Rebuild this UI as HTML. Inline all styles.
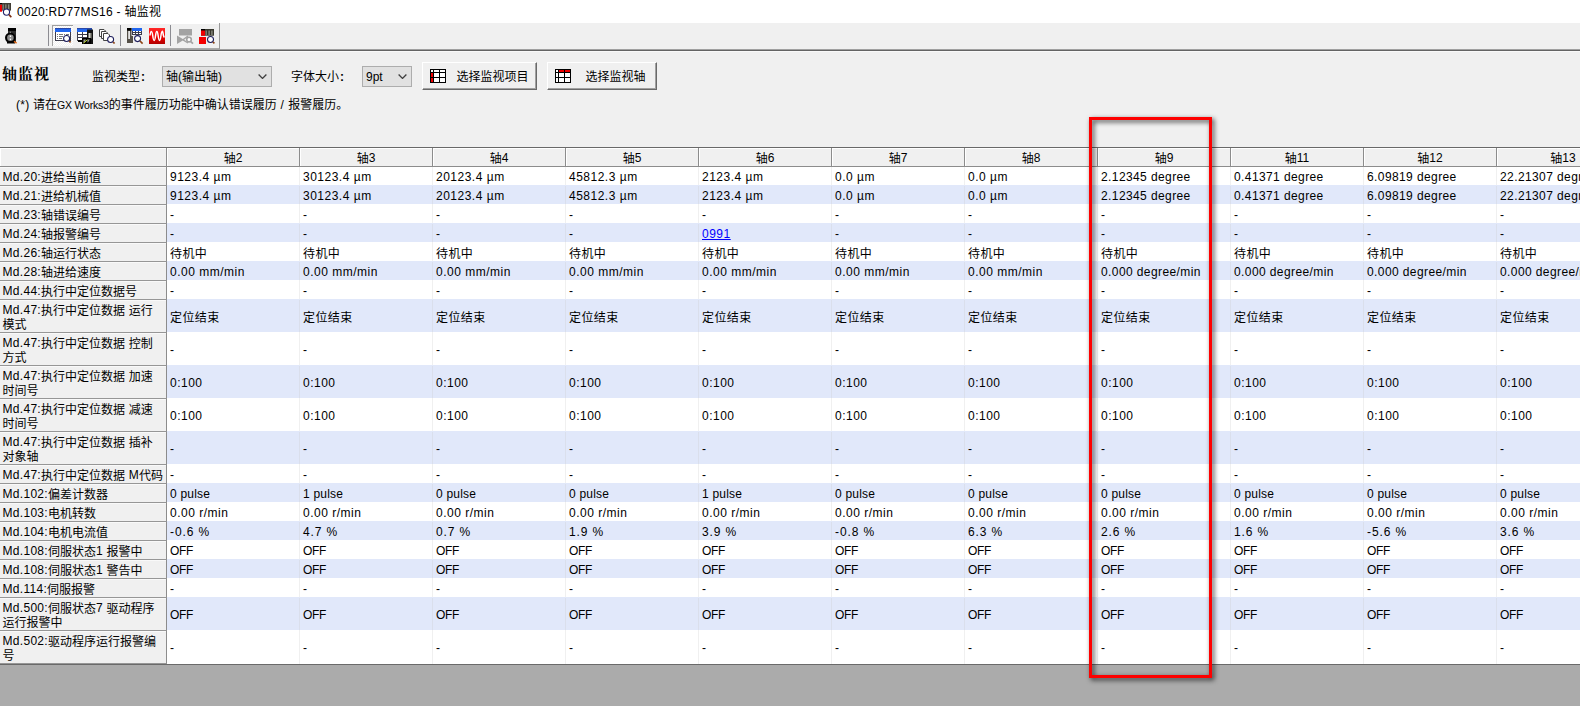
<!DOCTYPE html>
<html lang="zh-CN">
<head>
<meta charset="utf-8">
<title>0020:RD77MS16 - 轴监视</title>
<style>
html,body{margin:0;padding:0;}
body{width:1580px;height:706px;overflow:hidden;position:relative;background:#f0f0f0;
 font-family:"Liberation Sans","Noto Sans CJK SC",sans-serif;font-size:12px;color:#000;}
.abs{position:absolute;}
#titlebar{position:absolute;left:0;top:0;width:1580px;height:23px;background:#fff;}
#title{position:absolute;left:17px;top:4px;font-size:12px;line-height:16px;white-space:nowrap;letter-spacing:.3px;}
#toolbar{position:absolute;left:0;top:23px;width:1580px;height:26px;background:#f0f0f0;}
#tbline{position:absolute;left:0;top:49px;width:1580px;height:3px;background:linear-gradient(#a0a0a0 0,#a0a0a0 1px,#646464 1px,#646464 2px,#f9f9f9 2px,#f9f9f9 3px);}
#tbline2{position:absolute;left:0;top:48px;width:219px;height:1px;background:#a8a8a8;}
#tbend{position:absolute;left:219px;top:23px;width:1px;height:26px;background:#989898;}
.sep{position:absolute;top:26px;width:1px;height:20px;background:#a0a0a0;}
#h1{position:absolute;left:2px;top:64px;font-family:"Liberation Serif","Noto Serif CJK SC",serif;font-weight:bold;font-size:15px;line-height:20px;letter-spacing:1px;white-space:nowrap;}
.lbl{position:absolute;top:69px;line-height:16px;white-space:nowrap;}
.cl{font-weight:bold;margin-left:1px;}
.sel{position:absolute;top:66px;height:19px;border:1px solid #adadad;background:#e1e1e1;box-sizing:content-box;}
.sel span{position:absolute;left:3px;top:2px;line-height:17px;white-space:nowrap;}
.sel svg{position:absolute;right:4px;top:7px;}
.btn{position:absolute;top:62px;height:28px;box-sizing:border-box;background:#f0f0f0;
 border-top:1px solid #fff;border-left:1px solid #fff;border-right:1px solid #696969;border-bottom:1px solid #696969;}
.btn i{position:absolute;left:0;top:0;right:0;bottom:0;border-right:1px solid #a0a0a0;border-bottom:1px solid #a0a0a0;}
.btn svg{position:absolute;left:7px;top:6px;}
.btn span{position:absolute;top:6px;margin-left:-.5px;line-height:16px;white-space:nowrap;}
#note{position:absolute;left:16px;top:97px;line-height:16px;white-space:pre;}
#note u{text-decoration:none;font-size:10.5px;letter-spacing:-.2px;}
#tabletop{position:absolute;left:0;top:147px;width:1580px;height:1px;background:#696969;}
#grid{position:absolute;left:0;top:0;width:1580px;height:706px;overflow:hidden;}
.hr{position:absolute;left:0;top:148px;width:1700px;height:19px;background:#f0f0f0;}
.hc{position:absolute;top:0;width:132px;height:18px;border-right:1px solid #8c8c8c;border-bottom:1px solid #8c8c8c;box-shadow:inset 1px 1px 0 #fff;
 text-align:center;line-height:20px;white-space:nowrap;}
.hc.corner{left:0;width:166px;}
.r{position:absolute;left:0;width:1700px;}
.r.alt::before{content:"";position:absolute;left:167px;top:-1px;width:1500px;height:100%;background:#e1e8fa;}
#white{position:absolute;left:167px;top:167px;width:1413px;height:497px;background:#fff;}
.rh{position:absolute;left:0;top:0;width:167px;height:100%;box-sizing:border-box;background:#f0f0f0;
 border-right:1px solid #8c8c8c;border-bottom:1px solid #969696;box-shadow:inset 0 1px 0 #f9f9f9;}
.rh span{position:absolute;left:2.5px;top:3px;line-height:14px;white-space:nowrap;letter-spacing:.3px;}
b{font-weight:normal;position:relative;top:1px;letter-spacing:0;}
.c b{letter-spacing:.4px;}
.c{position:absolute;top:0;width:132px;height:100%;box-sizing:content-box;border-right:1px solid rgba(200,200,200,.28);
 white-space:nowrap;}
.r .c{line-height:20px;padding-left:0;text-indent:3px;letter-spacing:.5px;}
.r.tall .c{line-height:34px;}
.c a{color:#0000ff;text-decoration:underline;}
#gray{position:absolute;left:0;top:664px;width:1580px;height:42px;background:#ababab;border-top:1px solid #6a6a6a;box-sizing:border-box;}
#redbox{position:absolute;left:1089px;top:117px;width:117px;height:555px;border:3px solid #fe0000;
 filter:drop-shadow(2px 2px 2.5px rgba(0,0,0,.78));}
</style>
</head>
<body>
<div id="titlebar">
<svg class="abs" style="left:0;top:0" width="13" height="19" viewBox="0 0 13 19">
 <rect x="2" y="3" width="9" height="7.6" fill="#403c34"/>
 <rect x="2.6" y="4.4" width="1.2" height="5.6" fill="#8c8a80"/><rect x="5.2" y="4.4" width="1.3" height="5.6" fill="#8c8a80"/><rect x="8" y="4.4" width="1.4" height="5.6" fill="#8c8a80"/>
 <rect x="0" y="4.4" width="2" height="7.3" fill="#f00000"/><rect x="0" y="3" width="2" height="1.5" fill="#000"/>
 <circle cx="6.5" cy="12.1" r="3.1" fill="#fff" stroke="#22226a" stroke-width="1.1"/>
 <path d="M9 14.6 L11.3 17.2" stroke="#7a2c10" stroke-width="1.7"/>
</svg>
<div id="title">0020:RD77MS16 - 轴监视</div>
</div>
<div id="toolbar"></div>
<!--ICONS_START-->
<svg class="abs" style="left:0;top:23px" width="230" height="26" viewBox="0 23 230 26">
<defs>
<linearGradient id="rg" x1="0" y1="0" x2="0" y2="1"><stop offset="0" stop-color="#ff2a2a"/><stop offset=".55" stop-color="#f00000"/><stop offset="1" stop-color="#b00000"/></linearGradient>
<pattern id="chk" width="2" height="2" patternUnits="userSpaceOnUse"><rect width="2" height="2" fill="#f0f0f0"/><rect width="1" height="1" fill="#fff"/><rect x="1" y="1" width="1" height="1" fill="#fff"/></pattern>
</defs>
<!-- icon 1 : module + magnifier (black) -->
<rect x="8" y="28" width="8" height="15" fill="#2c2c2c"/>
<rect x="8" y="28" width="8" height="3" fill="#000"/>
<rect x="9.8" y="31.8" width="1.2" height="1.2" fill="#ddd"/>
<circle cx="10.3" cy="37.7" r="5.3" fill="#000"/>
<circle cx="10.4" cy="37.7" r="3.3" fill="#8a8a8a"/>
<rect x="9.8" y="35.5" width="1.3" height="1.5" fill="#fff"/><rect x="9.8" y="38.6" width="1.3" height="1.5" fill="#fff"/>
<rect x="7" y="41" width="8" height="2.5" fill="#000"/>
<path d="M14 41.3 L16.6 43.2" stroke="#e06a1a" stroke-width="1.5"/>
<!-- separators -->
<rect x="48" y="25" width="1" height="21" fill="#8c8c92"/>
<rect x="120" y="25" width="1" height="21" fill="#8c8c92"/>
<rect x="170" y="25" width="1" height="21" fill="#8c8c92"/>
<!-- pressed button bg -->
<rect x="52" y="25" width="21" height="21" fill="url(#chk)"/>
<rect x="52" y="25" width="21" height="1" fill="#a0a0a0"/><rect x="52" y="25" width="1" height="21" fill="#a0a0a0"/>
<!-- icon 2 : window + magnifier -->
<rect x="55.5" y="28.5" width="15" height="12" fill="#fff" stroke="#3c3c4c"/>
<rect x="55" y="28" width="16" height="4" fill="#2266ee"/><rect x="55" y="28" width="16" height="1" fill="#2a48a8"/>
<g fill="#777"><rect x="57" y="34" width="1" height="1"/><rect x="59" y="34" width="4" height="1"/><rect x="64" y="34" width="1" height="1"/><rect x="66" y="34" width="3" height="1"/>
<rect x="57" y="36" width="1" height="1"/><rect x="59" y="36" width="4" height="1"/><rect x="57" y="38" width="1" height="1"/><rect x="59" y="38" width="3" height="1"/></g>
<circle cx="66.6" cy="38.4" r="3" fill="#fff" stroke="#1c1c5c" stroke-width="1.05"/>
<path d="M69.2 41 L70.6 42.4" stroke="#8a4010" stroke-width="1.6"/>
<!-- icon 3 : table + module + graph -->
<rect x="77.5" y="28.5" width="13" height="12" fill="#fff" stroke="#3c3c4c"/>
<rect x="77" y="28" width="15" height="4" fill="#2266ee"/><rect x="77" y="28" width="15" height="1" fill="#2a48a8"/>
<path d="M82.5 32 V41 M78 34.5 H87 M78 37.5 H87" stroke="#3c3c4c" fill="none"/>
<rect x="78" y="40" width="5" height="2" fill="#000"/>
<rect x="87" y="29.5" width="6" height="14.5" fill="#111"/>
<rect x="88.5" y="33" width="2.2" height="5.5" fill="#d4d4cc"/><rect x="90.7" y="33" width="1" height="5.5" fill="#77776c"/>
<rect x="82" y="38" width="9" height="6" fill="#000"/>
<path d="M83.5 39.5 H86 L84 43 H83.5 Z M87.5 39.5 H89.8 L88 42.6 H87.5Z" fill="#999"/>
<path d="M83.6 43 L87.4 39.8" stroke="#b8d820" stroke-width="1"/>
<!-- icon 4 : pages + magnifier -->
<g fill="#fff" stroke="#444"><path d="M99.5 29.5 H104 L105.5 31 V36.5 H99.5Z"/><path d="M101.5 31.5 H106 L107.5 33 V38.5 H101.5Z"/><path d="M103.5 33.5 H108 L109.5 35 V40.5 H103.5Z"/></g>
<circle cx="110.6" cy="39.5" r="3" fill="#fff" stroke="#1c1c5c" stroke-width="1.05"/>
<path d="M113.2 42.1 L114.6 43.5" stroke="#8a4010" stroke-width="1.6"/>
<!-- icon 5 : module + table + magnifier -->
<rect x="127" y="28" width="4.5" height="15" fill="#555048"/><rect x="127" y="36" width="6" height="7" fill="#555048"/>
<rect x="127" y="28" width="4.5" height="2.6" fill="#000"/>
<rect x="128.2" y="31" width="1.8" height="8" fill="#e4e4e4"/>
<rect x="132.5" y="28.5" width="9" height="6" fill="#fff" stroke="#3c3c4c"/>
<rect x="132" y="28" width="10" height="3" fill="#2266ee"/>
<path d="M135.5 31 V35 M138.5 31 V35 M132 32.5 H142" stroke="#3c3c4c" fill="none"/>
<circle cx="137.6" cy="38.6" r="3" fill="#fff" stroke="#1c1c5c" stroke-width="1.05"/>
<path d="M140 41 L142.6 43.6" stroke="#8a4010" stroke-width="1.6"/>
<!-- icon 6 : red wave -->
<rect x="149" y="28" width="16" height="16" fill="url(#rg)"/>
<path d="M150 35.5 C150.7 30 152 30 152.8 36 S154.7 42 155.5 36 S157.4 30 158.2 36 S160.1 42 160.9 36 S162.7 30 163.3 35 L164.2 37.5" fill="none" stroke="#fff" stroke-width="1.5"/>
<!-- icon 7 : disabled -->
<g fill="#a3a3a3"><rect x="179" y="29" width="13" height="6.5"/><path d="M177 35.5 V44 L184 39.8Z"/></g>
<path d="M183 39.8 L188 36 M183 39.8 L188 43" stroke="#a3a3a3" stroke-width="1.4" fill="none"/>
<circle cx="189" cy="39.6" r="2.3" fill="#fff" stroke="#a3a3a3" stroke-width="1.6"/>
<path d="M190.8 41.6 L193 43.6" stroke="#a3a3a3" stroke-width="1.8"/>
<!-- icon 8 : red squares + module + magnifier -->
<rect x="201" y="29" width="13" height="6.7" fill="#38382e"/>
<rect x="201" y="29" width="4" height="6.7" fill="#f00000"/><rect x="201" y="29" width="4" height="1.5" fill="#000"/>
<rect x="205.6" y="30.5" width="1.2" height="4.5" fill="#8c8c82"/><rect x="208.4" y="30.5" width="1.4" height="4.5" fill="#8c8c82"/><rect x="211.2" y="30.5" width="1.4" height="4.5" fill="#8c8c82"/>
<rect x="199" y="37" width="7" height="7" fill="#f40000"/>
<circle cx="210.5" cy="39.4" r="3" fill="#fff" stroke="#1c1c5c" stroke-width="1.05"/>
<path d="M213 42 L214.4 43.4" stroke="#8a4010" stroke-width="1.6"/>
</svg>
<!--ICONS_END-->
<div class="abs" style="left:0;top:23px;width:219px;height:1px;background:#fff"></div><div id="tbline"></div><div id="tbline2"></div><div id="tbend"></div>
<div id="h1">轴监视</div>
<div class="lbl" style="left:92px">监视类型<span class="cl">:</span></div>
<div class="sel" style="left:162px;width:108px"><span>轴(输出轴)</span><svg width="9" height="5" viewBox="0 0 9 5"><path d="M0.6 0.6 L4.5 4.4 L8.4 0.6" fill="none" stroke="#404040" stroke-width="1.35"/></svg></div>
<div class="lbl" style="left:291px">字体大小<span class="cl">:</span></div>
<div class="sel" style="left:362px;width:48px"><span>9pt</span><svg width="9" height="5" viewBox="0 0 9 5"><path d="M0.6 0.6 L4.5 4.4 L8.4 0.6" fill="none" stroke="#404040" stroke-width="1.35"/></svg></div>
<div class="btn" style="left:422px;width:115px"><i></i>
<svg width="16" height="14" viewBox="0 0 16 14"><rect x="0.5" y="0.5" width="15" height="13" fill="#fff" stroke="#000"/><rect x="1" y="4" width="2" height="9" fill="#f00000"/><path d="M3.5 0 V14 M9.5 0 V14 M0 3.5 H16 M0 8.5 H16" stroke="#000" fill="none"/></svg>
<span style="left:34px">选择监视项目</span></div>
<div class="btn" style="left:547px;width:110px"><i></i>
<svg width="16" height="14" viewBox="0 0 16 14"><rect x="0.5" y="0.5" width="15" height="13" fill="#fff" stroke="#000"/><rect x="4" y="1" width="11" height="2" fill="#f00000"/><path d="M3.5 0 V14 M9.5 0 V14 M0 3.5 H16 M0 8.5 H16" stroke="#000" fill="none"/></svg>
<span style="left:38px">选择监视轴</span></div>
<div id="note"><span style="letter-spacing:.25px">(*) </span>请在<u>GX Works3</u>的事件履历功能中确认错误履历<span style="letter-spacing:.5px"> / </span>报警履历。</div>
<div id="tabletop"></div>
<div id="grid"><div id="white"></div>
<div class="hr">
<div class="hc corner"></div>
<div class="hc" style="left:167px"><b>轴</b>2</div>
<div class="hc" style="left:300px"><b>轴</b>3</div>
<div class="hc" style="left:433px"><b>轴</b>4</div>
<div class="hc" style="left:566px"><b>轴</b>5</div>
<div class="hc" style="left:699px"><b>轴</b>6</div>
<div class="hc" style="left:832px"><b>轴</b>7</div>
<div class="hc" style="left:965px"><b>轴</b>8</div>
<div class="hc" style="left:1098px"><b>轴</b>9</div>
<div class="hc" style="left:1231px"><b>轴</b>11</div>
<div class="hc" style="left:1364px"><b>轴</b>12</div>
<div class="hc" style="left:1497px"><b>轴</b>13</div>
</div>
<div class="r" style="top:167px;height:19px">
<div class="rh"><span>Md.20:<b>进给当前值</b></span></div>
<div class="c" style="left:167px">9123.4 µm</div>
<div class="c" style="left:300px">30123.4 µm</div>
<div class="c" style="left:433px">20123.4 µm</div>
<div class="c" style="left:566px">45812.3 µm</div>
<div class="c" style="left:699px">2123.4 µm</div>
<div class="c" style="left:832px">0.0 µm</div>
<div class="c" style="left:965px">0.0 µm</div>
<div class="c" style="left:1098px;letter-spacing:.4px">2.12345 degree</div>
<div class="c" style="left:1231px;letter-spacing:.4px">0.41371 degree</div>
<div class="c" style="left:1364px;letter-spacing:.4px">6.09819 degree</div>
<div class="c" style="left:1497px;letter-spacing:.4px">22.21307 degree</div>
</div>
<div class="r alt" style="top:186px;height:19px">
<div class="rh"><span>Md.21:<b>进给机械值</b></span></div>
<div class="c" style="left:167px">9123.4 µm</div>
<div class="c" style="left:300px">30123.4 µm</div>
<div class="c" style="left:433px">20123.4 µm</div>
<div class="c" style="left:566px">45812.3 µm</div>
<div class="c" style="left:699px">2123.4 µm</div>
<div class="c" style="left:832px">0.0 µm</div>
<div class="c" style="left:965px">0.0 µm</div>
<div class="c" style="left:1098px;letter-spacing:.4px">2.12345 degree</div>
<div class="c" style="left:1231px;letter-spacing:.4px">0.41371 degree</div>
<div class="c" style="left:1364px;letter-spacing:.4px">6.09819 degree</div>
<div class="c" style="left:1497px;letter-spacing:.4px">22.21307 degree</div>
</div>
<div class="r" style="top:205px;height:19px">
<div class="rh"><span>Md.23:<b>轴错误编号</b></span></div>
<div class="c" style="left:167px">-</div>
<div class="c" style="left:300px">-</div>
<div class="c" style="left:433px">-</div>
<div class="c" style="left:566px">-</div>
<div class="c" style="left:699px">-</div>
<div class="c" style="left:832px">-</div>
<div class="c" style="left:965px">-</div>
<div class="c" style="left:1098px">-</div>
<div class="c" style="left:1231px">-</div>
<div class="c" style="left:1364px">-</div>
<div class="c" style="left:1497px">-</div>
</div>
<div class="r alt" style="top:224px;height:19px">
<div class="rh"><span>Md.24:<b>轴报警编号</b></span></div>
<div class="c" style="left:167px">-</div>
<div class="c" style="left:300px">-</div>
<div class="c" style="left:433px">-</div>
<div class="c" style="left:566px">-</div>
<div class="c" style="left:699px"><a>0991</a></div>
<div class="c" style="left:832px">-</div>
<div class="c" style="left:965px">-</div>
<div class="c" style="left:1098px">-</div>
<div class="c" style="left:1231px">-</div>
<div class="c" style="left:1364px">-</div>
<div class="c" style="left:1497px">-</div>
</div>
<div class="r" style="top:243px;height:19px">
<div class="rh"><span>Md.26:<b>轴运行状态</b></span></div>
<div class="c" style="left:167px"><b>待机中</b></div>
<div class="c" style="left:300px"><b>待机中</b></div>
<div class="c" style="left:433px"><b>待机中</b></div>
<div class="c" style="left:566px"><b>待机中</b></div>
<div class="c" style="left:699px"><b>待机中</b></div>
<div class="c" style="left:832px"><b>待机中</b></div>
<div class="c" style="left:965px"><b>待机中</b></div>
<div class="c" style="left:1098px"><b>待机中</b></div>
<div class="c" style="left:1231px"><b>待机中</b></div>
<div class="c" style="left:1364px"><b>待机中</b></div>
<div class="c" style="left:1497px"><b>待机中</b></div>
</div>
<div class="r alt" style="top:262px;height:19px">
<div class="rh"><span>Md.28:<b>轴进给速度</b></span></div>
<div class="c" style="left:167px">0.00 mm/min</div>
<div class="c" style="left:300px">0.00 mm/min</div>
<div class="c" style="left:433px">0.00 mm/min</div>
<div class="c" style="left:566px">0.00 mm/min</div>
<div class="c" style="left:699px">0.00 mm/min</div>
<div class="c" style="left:832px">0.00 mm/min</div>
<div class="c" style="left:965px">0.00 mm/min</div>
<div class="c" style="left:1098px;letter-spacing:.4px">0.000 degree/min</div>
<div class="c" style="left:1231px;letter-spacing:.4px">0.000 degree/min</div>
<div class="c" style="left:1364px;letter-spacing:.4px">0.000 degree/min</div>
<div class="c" style="left:1497px;letter-spacing:.4px">0.000 degree/min</div>
</div>
<div class="r" style="top:281px;height:19px">
<div class="rh"><span>Md.44:<b>执行中定位数据号</b></span></div>
<div class="c" style="left:167px">-</div>
<div class="c" style="left:300px">-</div>
<div class="c" style="left:433px">-</div>
<div class="c" style="left:566px">-</div>
<div class="c" style="left:699px">-</div>
<div class="c" style="left:832px">-</div>
<div class="c" style="left:965px">-</div>
<div class="c" style="left:1098px">-</div>
<div class="c" style="left:1231px">-</div>
<div class="c" style="left:1364px">-</div>
<div class="c" style="left:1497px">-</div>
</div>
<div class="r alt tall" style="top:300px;height:33px">
<div class="rh"><span>Md.47:<b>执行中定位数据</b> <b>运行</b><br><b>模式</b></span></div>
<div class="c" style="left:167px"><b>定位结束</b></div>
<div class="c" style="left:300px"><b>定位结束</b></div>
<div class="c" style="left:433px"><b>定位结束</b></div>
<div class="c" style="left:566px"><b>定位结束</b></div>
<div class="c" style="left:699px"><b>定位结束</b></div>
<div class="c" style="left:832px"><b>定位结束</b></div>
<div class="c" style="left:965px"><b>定位结束</b></div>
<div class="c" style="left:1098px"><b>定位结束</b></div>
<div class="c" style="left:1231px"><b>定位结束</b></div>
<div class="c" style="left:1364px"><b>定位结束</b></div>
<div class="c" style="left:1497px"><b>定位结束</b></div>
</div>
<div class="r tall" style="top:333px;height:33px">
<div class="rh"><span>Md.47:<b>执行中定位数据</b> <b>控制</b><br><b>方式</b></span></div>
<div class="c" style="left:167px">-</div>
<div class="c" style="left:300px">-</div>
<div class="c" style="left:433px">-</div>
<div class="c" style="left:566px">-</div>
<div class="c" style="left:699px">-</div>
<div class="c" style="left:832px">-</div>
<div class="c" style="left:965px">-</div>
<div class="c" style="left:1098px">-</div>
<div class="c" style="left:1231px">-</div>
<div class="c" style="left:1364px">-</div>
<div class="c" style="left:1497px">-</div>
</div>
<div class="r alt tall" style="top:366px;height:33px">
<div class="rh"><span>Md.47:<b>执行中定位数据</b> <b>加速</b><br><b>时间号</b></span></div>
<div class="c" style="left:167px">0:100</div>
<div class="c" style="left:300px">0:100</div>
<div class="c" style="left:433px">0:100</div>
<div class="c" style="left:566px">0:100</div>
<div class="c" style="left:699px">0:100</div>
<div class="c" style="left:832px">0:100</div>
<div class="c" style="left:965px">0:100</div>
<div class="c" style="left:1098px">0:100</div>
<div class="c" style="left:1231px">0:100</div>
<div class="c" style="left:1364px">0:100</div>
<div class="c" style="left:1497px">0:100</div>
</div>
<div class="r tall" style="top:399px;height:33px">
<div class="rh"><span>Md.47:<b>执行中定位数据</b> <b>减速</b><br><b>时间号</b></span></div>
<div class="c" style="left:167px">0:100</div>
<div class="c" style="left:300px">0:100</div>
<div class="c" style="left:433px">0:100</div>
<div class="c" style="left:566px">0:100</div>
<div class="c" style="left:699px">0:100</div>
<div class="c" style="left:832px">0:100</div>
<div class="c" style="left:965px">0:100</div>
<div class="c" style="left:1098px">0:100</div>
<div class="c" style="left:1231px">0:100</div>
<div class="c" style="left:1364px">0:100</div>
<div class="c" style="left:1497px">0:100</div>
</div>
<div class="r alt tall" style="top:432px;height:33px">
<div class="rh"><span>Md.47:<b>执行中定位数据</b> <b>插补</b><br><b>对象轴</b></span></div>
<div class="c" style="left:167px">-</div>
<div class="c" style="left:300px">-</div>
<div class="c" style="left:433px">-</div>
<div class="c" style="left:566px">-</div>
<div class="c" style="left:699px">-</div>
<div class="c" style="left:832px">-</div>
<div class="c" style="left:965px">-</div>
<div class="c" style="left:1098px">-</div>
<div class="c" style="left:1231px">-</div>
<div class="c" style="left:1364px">-</div>
<div class="c" style="left:1497px">-</div>
</div>
<div class="r" style="top:465px;height:19px">
<div class="rh"><span>Md.47:<b>执行中定位数据</b> M<b>代码</b></span></div>
<div class="c" style="left:167px">-</div>
<div class="c" style="left:300px">-</div>
<div class="c" style="left:433px">-</div>
<div class="c" style="left:566px">-</div>
<div class="c" style="left:699px">-</div>
<div class="c" style="left:832px">-</div>
<div class="c" style="left:965px">-</div>
<div class="c" style="left:1098px">-</div>
<div class="c" style="left:1231px">-</div>
<div class="c" style="left:1364px">-</div>
<div class="c" style="left:1497px">-</div>
</div>
<div class="r alt" style="top:484px;height:19px">
<div class="rh"><span>Md.102:<b>偏差计数器</b></span></div>
<div class="c" style="left:167px;letter-spacing:.2px">0 pulse</div>
<div class="c" style="left:300px;letter-spacing:.2px">1 pulse</div>
<div class="c" style="left:433px;letter-spacing:.2px">0 pulse</div>
<div class="c" style="left:566px;letter-spacing:.2px">0 pulse</div>
<div class="c" style="left:699px;letter-spacing:.2px">1 pulse</div>
<div class="c" style="left:832px;letter-spacing:.2px">0 pulse</div>
<div class="c" style="left:965px;letter-spacing:.2px">0 pulse</div>
<div class="c" style="left:1098px;letter-spacing:.2px">0 pulse</div>
<div class="c" style="left:1231px;letter-spacing:.2px">0 pulse</div>
<div class="c" style="left:1364px;letter-spacing:.2px">0 pulse</div>
<div class="c" style="left:1497px;letter-spacing:.2px">0 pulse</div>
</div>
<div class="r" style="top:503px;height:19px">
<div class="rh"><span>Md.103:<b>电机转数</b></span></div>
<div class="c" style="left:167px">0.00 r/min</div>
<div class="c" style="left:300px">0.00 r/min</div>
<div class="c" style="left:433px">0.00 r/min</div>
<div class="c" style="left:566px">0.00 r/min</div>
<div class="c" style="left:699px">0.00 r/min</div>
<div class="c" style="left:832px">0.00 r/min</div>
<div class="c" style="left:965px">0.00 r/min</div>
<div class="c" style="left:1098px">0.00 r/min</div>
<div class="c" style="left:1231px">0.00 r/min</div>
<div class="c" style="left:1364px">0.00 r/min</div>
<div class="c" style="left:1497px">0.00 r/min</div>
</div>
<div class="r alt" style="top:522px;height:19px">
<div class="rh"><span>Md.104:<b>电机电流值</b></span></div>
<div class="c" style="left:167px;letter-spacing:.9px">-0.6 %</div>
<div class="c" style="left:300px;letter-spacing:.9px">4.7 %</div>
<div class="c" style="left:433px;letter-spacing:.9px">0.7 %</div>
<div class="c" style="left:566px;letter-spacing:.9px">1.9 %</div>
<div class="c" style="left:699px;letter-spacing:.9px">3.9 %</div>
<div class="c" style="left:832px;letter-spacing:.9px">-0.8 %</div>
<div class="c" style="left:965px;letter-spacing:.9px">6.3 %</div>
<div class="c" style="left:1098px;letter-spacing:.9px">2.6 %</div>
<div class="c" style="left:1231px;letter-spacing:.9px">1.6 %</div>
<div class="c" style="left:1364px;letter-spacing:.9px">-5.6 %</div>
<div class="c" style="left:1497px;letter-spacing:.9px">3.6 %</div>
</div>
<div class="r" style="top:541px;height:19px">
<div class="rh"><span>Md.108:<b>伺服状态</b>1 <b>报警中</b></span></div>
<div class="c" style="left:167px;letter-spacing:-.3px">OFF</div>
<div class="c" style="left:300px;letter-spacing:-.3px">OFF</div>
<div class="c" style="left:433px;letter-spacing:-.3px">OFF</div>
<div class="c" style="left:566px;letter-spacing:-.3px">OFF</div>
<div class="c" style="left:699px;letter-spacing:-.3px">OFF</div>
<div class="c" style="left:832px;letter-spacing:-.3px">OFF</div>
<div class="c" style="left:965px;letter-spacing:-.3px">OFF</div>
<div class="c" style="left:1098px;letter-spacing:-.3px">OFF</div>
<div class="c" style="left:1231px;letter-spacing:-.3px">OFF</div>
<div class="c" style="left:1364px;letter-spacing:-.3px">OFF</div>
<div class="c" style="left:1497px;letter-spacing:-.3px">OFF</div>
</div>
<div class="r alt" style="top:560px;height:19px">
<div class="rh"><span>Md.108:<b>伺服状态</b>1 <b>警告中</b></span></div>
<div class="c" style="left:167px;letter-spacing:-.3px">OFF</div>
<div class="c" style="left:300px;letter-spacing:-.3px">OFF</div>
<div class="c" style="left:433px;letter-spacing:-.3px">OFF</div>
<div class="c" style="left:566px;letter-spacing:-.3px">OFF</div>
<div class="c" style="left:699px;letter-spacing:-.3px">OFF</div>
<div class="c" style="left:832px;letter-spacing:-.3px">OFF</div>
<div class="c" style="left:965px;letter-spacing:-.3px">OFF</div>
<div class="c" style="left:1098px;letter-spacing:-.3px">OFF</div>
<div class="c" style="left:1231px;letter-spacing:-.3px">OFF</div>
<div class="c" style="left:1364px;letter-spacing:-.3px">OFF</div>
<div class="c" style="left:1497px;letter-spacing:-.3px">OFF</div>
</div>
<div class="r" style="top:579px;height:19px">
<div class="rh"><span>Md.114:<b>伺服报警</b></span></div>
<div class="c" style="left:167px">-</div>
<div class="c" style="left:300px">-</div>
<div class="c" style="left:433px">-</div>
<div class="c" style="left:566px">-</div>
<div class="c" style="left:699px">-</div>
<div class="c" style="left:832px">-</div>
<div class="c" style="left:965px">-</div>
<div class="c" style="left:1098px">-</div>
<div class="c" style="left:1231px">-</div>
<div class="c" style="left:1364px">-</div>
<div class="c" style="left:1497px">-</div>
</div>
<div class="r alt tall" style="top:598px;height:33px">
<div class="rh"><span>Md.500:<b>伺服状态</b>7 <b>驱动程序</b><br><b>运行报警中</b></span></div>
<div class="c" style="left:167px;letter-spacing:-.3px">OFF</div>
<div class="c" style="left:300px;letter-spacing:-.3px">OFF</div>
<div class="c" style="left:433px;letter-spacing:-.3px">OFF</div>
<div class="c" style="left:566px;letter-spacing:-.3px">OFF</div>
<div class="c" style="left:699px;letter-spacing:-.3px">OFF</div>
<div class="c" style="left:832px;letter-spacing:-.3px">OFF</div>
<div class="c" style="left:965px;letter-spacing:-.3px">OFF</div>
<div class="c" style="left:1098px;letter-spacing:-.3px">OFF</div>
<div class="c" style="left:1231px;letter-spacing:-.3px">OFF</div>
<div class="c" style="left:1364px;letter-spacing:-.3px">OFF</div>
<div class="c" style="left:1497px;letter-spacing:-.3px">OFF</div>
</div>
<div class="r tall" style="top:631px;height:33px">
<div class="rh"><span>Md.502:<b>驱动程序运行报警编</b><br><b>号</b></span></div>
<div class="c" style="left:167px">-</div>
<div class="c" style="left:300px">-</div>
<div class="c" style="left:433px">-</div>
<div class="c" style="left:566px">-</div>
<div class="c" style="left:699px">-</div>
<div class="c" style="left:832px">-</div>
<div class="c" style="left:965px">-</div>
<div class="c" style="left:1098px">-</div>
<div class="c" style="left:1231px">-</div>
<div class="c" style="left:1364px">-</div>
<div class="c" style="left:1497px">-</div>
</div></div>
<div id="gray"></div>
<div id="redbox"></div>
</body>
</html>
